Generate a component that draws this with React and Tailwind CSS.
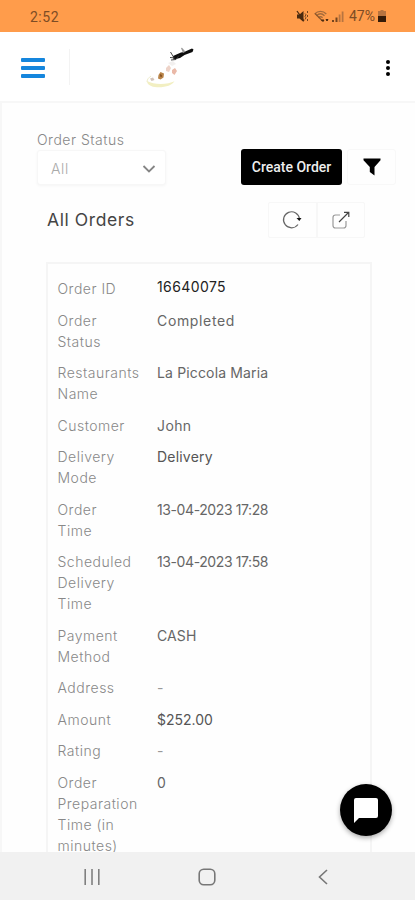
import { useState } from "react";

const orderRows = [
  { label: ["Order ID"], value: "16640075", style: "-mt-[2px] tracking-[0.4px] text-[#222]" },
  { label: ["Order", "Status"], value: "Completed", style: "tracking-[0.65px] text-[#666]" },
  { label: ["Restaurants", "Name"], value: "La Piccola Maria", style: "tracking-[0.15px] text-[#666]" },
  { label: ["Customer"], value: "John", style: "tracking-[0.4px] text-[#666]" },
  { label: ["Delivery", "Mode"], value: "Delivery", style: "tracking-[0.2px] text-[#555]" },
  { label: ["Order", "Time"], value: "13-04-2023 17:28", style: "tracking-[-0.4px] text-[#666]" },
  { label: ["Scheduled", "Delivery", "Time"], value: "13-04-2023 17:58", style: "tracking-[-0.4px] text-[#666]" },
  { label: ["Payment", "Method"], value: "CASH", style: "tracking-[0.1px] text-[#666]" },
  { label: ["Address"], value: "-", style: "text-[#999]" },
  { label: ["Amount"], value: "$252.00", style: "text-[#555]" },
  { label: ["Rating"], value: "-", style: "text-[#999]" },
  { label: ["Order", "Preparation", "Time (in", "minutes)"], value: "0", style: "text-[#666]" },
];

function StatusBar() {
  return (
    <div className="flex h-8 shrink-0 items-center justify-between bg-[#ff9c4b] pl-[30px] pr-[29px] font-[Roboto,sans-serif] text-[14px] text-[#7d4c25]">
      <span className="pt-[2px] tracking-[0.5px]">2:52</span>
      <div className="flex items-center">
        {/* muted + vibrate */}
        <svg width="13" height="13" viewBox="0 0 13 13" className="mr-[5px]">
          <path d="M1 4.5h2.5L7.5 1v11L3.5 8.5H1z" fill="#4a2a10" />
          <path d="M1 1l7 10" stroke="#4a2a10" strokeWidth="1.3" />
          <path d="M9 3.5l1 1.3-1 1.5 1 1.5-1 1.7M11.5 1v2M11.5 5v2M11.5 9v2" stroke="#74451f" strokeWidth="1" fill="none" />
        </svg>
        <svg width="15" height="13" viewBox="0 0 15 13" className="mr-[3px]">
          <path d="M.7 4C4 .6 9 .6 12.3 4M2.5 5.8c2.4-2.4 5.6-2.4 8 0M4.4 7.7c1.3-1.2 2.9-1.2 4.2 0" stroke="#a56b3b" strokeWidth="1.3" fill="none" />
          <path d="M1 3.5L8.5 11" stroke="#8a5428" strokeWidth="1.1" />
          <path d="M7.5 10l1.500 1.500 1-1.500zM12 9.500l1 1.500 1-1.500z" stroke="#4a2a10" strokeWidth="1" fill="#4a2a10" />
        </svg>
        <svg width="12" height="12" viewBox="0 0 12 12" className="mr-[5px]">
          <path d="M0 10h2v2H0zM3.5 7.5h2V12h-2z" fill="#74451f" />
          <path d="M6.7 4.5h1.8V12H6.7zM9.7 1.5h1.8V12H9.7z" fill="#b87440" />
        </svg>
        <span className="w-[27px] whitespace-nowrap pt-px">47%</span>
        <svg width="8" height="12" viewBox="0 0 8 12" className="ml-[2px]">
          <path d="M2.5 0h3v1H8v5H0V1h2.5z" fill="#b87440" />
          <path d="M0 6h8v6H0z" fill="#351b08" />
        </svg>
      </div>
    </div>
  );
}

function BrandLogo() {
  return (
    <svg width="50" height="44" viewBox="0 0 50 44">
      <path d="M2 36c0 3.5 4 6 10 6.3 9 .3 15-2 17.5-6-6 3-20 4-27.5-.3z" fill="#f2efc2" />
      <path d="M2 37c0-3 2-4.5 4-6" stroke="#efedcc" fill="none" />
      <path d="M5 33.5l3-1 1.5 2.5-3 1z" fill="#d2c3ba" />
      <path d="M13.5 30l2-3 3.5 1.5-.5 4-3 2-2.5-1z" fill="#b98449" />
      <path d="M15 29l2 1v2l-2-.5z" fill="#8a5523" />
      <path d="M21 23l3-3 2 3-2 4-3-1z" fill="#eed3c8" />
      <path d="M27 25l3-2 2 3-2.5 4-2.5-2z" fill="#eab9a8" />
      <path d="M23 18l5-2 3 3-4 2z" fill="#f2f0ef" />
      <path d="M28 11l8-3.5 3-.5 8-3.5 1.500 1-1 2.500-8 3-4.500 3-6.500 1.500z" fill="#0d0d0d" />
      <path d="M38 8l-2-5 1-.3 3.5 4z" fill="#999" />
      <path d="M25.5 7l3 5M25 12.5l5 .5M34 10.500l-3 4-5 .5" stroke="#333" strokeWidth=".9" fill="none" />
    </svg>
  );
}

function Header() {
  return (
    <header className="flex h-[71px] shrink-0 items-center border-b-2 border-[#f7f7f7] bg-white pl-[21px] pr-[24px]">
      <button className="mt-[2px] flex w-6 flex-col gap-[4px]" aria-label="Menu">
        <span className="h-[4px] rounded-[1px] bg-[#1586dd]" />
        <span className="h-[4px] rounded-[1px] bg-[#1586dd]" />
        <span className="h-[4px] rounded-[1px] bg-[#1586dd]" />
      </button>
      <div className="ml-[24px] h-[36px] w-px bg-[#f3f3f3]" />
      <div className="ml-[75px]">
        <BrandLogo />
      </div>
      <button className="ml-auto flex flex-col gap-[2px] pr-px pt-[2px]" aria-label="More">
        <span className="size-[4px] rounded-full bg-black" />
        <span className="size-[4px] rounded-full bg-black" />
        <span className="size-[4px] rounded-full bg-black" />
      </button>
    </header>
  );
}

function Filters({ status }) {
  return (
    <div className="flex items-end pl-[35px] pr-[19px] pt-[27px]">
      <div className="w-[129px]">
        <label className="block text-[14px] font-light leading-[20px] tracking-[0.5px] text-[#888]">Order Status</label>
        <div className="flex h-[35px] items-center justify-between rounded-[3px] border border-[#f7f7f7] bg-white pl-[13px] pr-[9px] pt-[2px] text-[14px] font-light text-[#aaa] shadow-[0_1px_3px_#0000000a]">
          <span className="tracking-[0.6px]">{status}</span>
          <svg width="14" height="8" viewBox="0 0 14 8">
            <path d="M1.5 1L7 6.5 12.5 1" stroke="#858585" strokeWidth="1.8" fill="none" />
          </svg>
        </div>
      </div>
      <button className="ml-auto h-[36px] w-[101px] rounded-[3px] bg-black pt-px font-[Roboto,sans-serif] text-[14px] font-medium text-[#eee]">Create Order</button>
      <button className="ml-[5px] flex h-[36px] w-[49px] items-center justify-center rounded-[3px] border border-[#f8f8f8]" aria-label="Filter">
        <svg width="18" height="18" viewBox="0 0 18 18">
          <path d="M.5.5h17v1.8L11.5 9v8.5L6.8 14V9L.5 2.3z" fill="#000" />
        </svg>
      </button>
    </div>
  );
}

function TitleRow() {
  return (
    <div className="flex items-center justify-between pl-[45px] pr-[50px] pt-[17px]">
      <h1 className="text-[17.5px] font-normal tracking-[0.6px] text-[#444]">All Orders</h1>
      <div className="flex h-[36px] w-[97px] rounded-[2px] border border-[#f7f7f7]">
        <button className="flex flex-1 items-center justify-center border-r-2 border-[#f7f7f7]" aria-label="Refresh">
          <svg width="20" height="20" viewBox="0 0 20 20" fill="none">
            <path d="M17.5 9A8 8 0 1 0 16 14.5" stroke="#666" strokeWidth="1.2" />
            <path d="M14.5 8h5L17.3 11z" fill="#111" />
          </svg>
        </button>
        <button className="flex flex-1 items-center justify-center" aria-label="Export">
          <svg width="18" height="18" viewBox="0 0 18 18" fill="none">
            <path d="M8 4H3.5Q1 4 1 6.5v8Q1 17 3.5 17h8Q14 17 14 14.5V10" stroke="#999" strokeWidth="1.2" />
            <path d="M7 11L16.5 1.5M12 1.3h4.8V6" stroke="#444" strokeWidth="1.2" />
          </svg>
        </button>
      </div>
    </div>
  );
}

function OrderCard() {
  return (
    <div className="ml-[44px] mr-[43px] mt-[24px] border-2 border-[#f5f5f5] pb-4 pl-[9.5px] pt-[14px] text-[14px] leading-[21px]">
      <div className="flex flex-col gap-[10.5px]">
        {orderRows.map((row) => (
          <div key={row.label.join(" ")} className="flex">
            <div className="w-[99.5px] shrink-0 font-light tracking-[0.5px] text-[#888]">
              {row.label.map((line) => (
                <div key={line}>{line}</div>
              ))}
            </div>
            <div className="whitespace-nowrap">
              <div className={row.style}>{row.value}</div>
            </div>
          </div>
        ))}
      </div>
    </div>
  );
}

function NavBar() {
  return (
    <nav className="flex h-[48px] shrink-0 items-center bg-[#f1f1f1] pl-[84px] pr-[87px] pt-px">
      <svg width="16" height="16" viewBox="0 0 16 16">
        <path d="M1.2 0v16M8 0v16M14.8 0v16" stroke="#808080" strokeWidth="1.6" />
      </svg>
      <svg width="18" height="18" viewBox="0 0 18 18" className="ml-[98px]">
        <rect x="1.2" y="1.2" width="15.6" height="15.6" rx="4.5" stroke="#777" strokeWidth="1.6" fill="none" />
      </svg>
      <svg width="10" height="16" viewBox="0 0 10 16" className="ml-auto">
        <path d="M9 1L1.5 8 9 15" stroke="#777" strokeWidth="1.6" fill="none" />
      </svg>
    </nav>
  );
}

export default function App() {
  const [status] = useState("All");

  return (
    <div className="relative flex h-[900px] w-[415px] flex-col overflow-hidden bg-white font-[Inter,sans-serif]">
      <StatusBar />
      <Header />
      <main className="min-h-0 flex-1 overflow-hidden border-l-2 border-[#f7f7f7] bg-[#fefefe]">
        <Filters status={status} />
        <TitleRow />
        <OrderCard />
      </main>
      <NavBar />
      <button className="absolute bottom-[64px] right-[23px] flex size-[52px] items-center justify-center rounded-full bg-black shadow-[0_2px_5px_#0005]" aria-label="Chat">
        <svg width="26" height="26" viewBox="0 0 26 26">
          <path d="M3 1h20q2 0 2 2v16q0 2-2 2H6l-5 5V3q0-2 2-2z" fill="#fff" />
        </svg>
      </button>
    </div>
  );
}
